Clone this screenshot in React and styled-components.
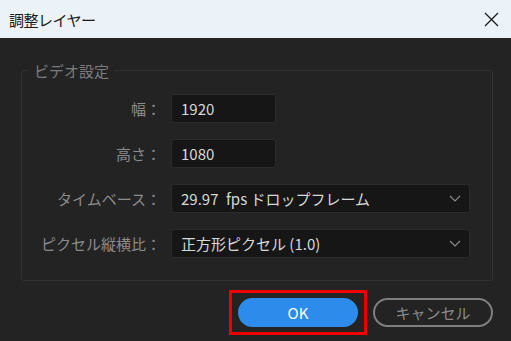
import React from 'react';
import styled, { createGlobalStyle } from 'styled-components';

const GlobalStyle = createGlobalStyle`
  html, body {
    margin: 0;
    padding: 0;
    background: #232323;
  }
  body {
    font-family: "Noto Sans CJK JP", "Noto Sans", sans-serif;
  }
`;

const Dialog = styled.div`
  width: 511px;
  height: 341px;
  display: flex;
  flex-direction: column;
  background: #232323;
  overflow: hidden;
`;

const TitleBar = styled.div`
  height: 38px;
  flex: none;
  display: flex;
  align-items: center;
  justify-content: space-between;
  padding: 0 12px 0 9px;
  background: #ecf3f8;
  color: #1a1a1a;
  font-size: 15px;
  letter-spacing: -0.5px;
`;

const Body = styled.div`
  flex: 1;
  display: flex;
  flex-direction: column;
  padding: 24px 18px 0 21px;
`;

const Group = styled.fieldset`
  margin: 0;
  padding: 15px 0 21px 0;
  border: 1px solid #313131;
  border-radius: 3px;
  height: 219px;
  box-sizing: border-box;
  display: flex;
  flex-direction: column;
  gap: 16px;
`;

const Legend = styled.legend`
  margin-left: 7px;
  padding: 0 5px;
  color: #7c7c7c;
  font-size: 15px;
  line-height: 17px;
`;

const Row = styled.div`
  display: grid;
  grid-template-columns: 139px auto;
  column-gap: 10px;
  align-items: center;
`;

const Label = styled.span`
  text-align: right;
  color: #8b8b8b;
  font-size: 15px;
  white-space: nowrap;
`;

const Field = styled.div`
  height: 29px;
  width: ${p => p.$width}px;
  box-sizing: border-box;
  display: flex;
  align-items: center;
  justify-content: space-between;
  padding: 0 8px 0 9px;
  background: #161616;
  border: 1px solid #2b2b2b;
  border-radius: 3px;
  color: #d8d8d8;
  font-size: 15px;
`;

const Value = styled.span`
  white-space: pre;
`;

const Chevron = () => (
  <svg width="12" height="7" viewBox="0 0 12 7">
    <path d="M1 1l5 5 5-5" fill="none" stroke="#8a8a8a" strokeWidth="1.2" />
  </svg>
);

const Buttons = styled.div`
  display: flex;
  justify-content: flex-end;
  align-items: center;
  gap: 6px;
  padding-top: 9px;
`;

const Highlight = styled.div`
  border: 3px solid #ee0000;
  padding: 5px 6px;
`;

const Button = styled.button`
  width: 120px;
  height: 29px;
  box-sizing: border-box;
  border-radius: 15px;
  font-family: "Noto Sans CJK JP", "Noto Sans", sans-serif;
  font-size: 15px;
  display: flex;
  align-items: center;
  justify-content: center;
  padding: 0;
  background: ${p => (p.$primary ? '#2d8ceb' : 'transparent')};
  color: ${p => (p.$primary ? '#ffffff' : '#8a8a8a')};
  border: 2px solid ${p => (p.$primary ? '#2d8ceb' : '#7e7e7e')};
`;

const rows = [
  { label: '幅：', value: '1920', width: 105 },
  { label: '高さ：', value: '1080', width: 105 },
  { label: 'タイムベース：', value: '29.97\u2002fps ドロップフレーム', width: 299, select: true },
  { label: 'ピクセル縦横比：', value: '正方形ピクセル (1.0)', width: 299, select: true },
];

export default function App() {
  return (
    <Dialog>
      <GlobalStyle />
      <TitleBar>
        <span>調整レイヤー</span>
        <svg width="15" height="15" viewBox="0 0 15 15">
          <path d="M1 1l13 13M14 1L1 14" stroke="#1a1a1a" strokeWidth="1.3" />
        </svg>
      </TitleBar>
      <Body>
        <Group>
          <Legend>ビデオ設定</Legend>
          {rows.map(r => (
            <Row key={r.label}>
              <Label>{r.label}</Label>
              <Field $width={r.width}>
                <Value>{r.value}</Value>
                {r.select ? <Chevron /> : null}
              </Field>
            </Row>
          ))}
        </Group>
        <Buttons>
          <Highlight>
            <Button $primary>OK</Button>
          </Highlight>
          <Button>キャンセル</Button>
        </Buttons>
      </Body>
    </Dialog>
  );
}
